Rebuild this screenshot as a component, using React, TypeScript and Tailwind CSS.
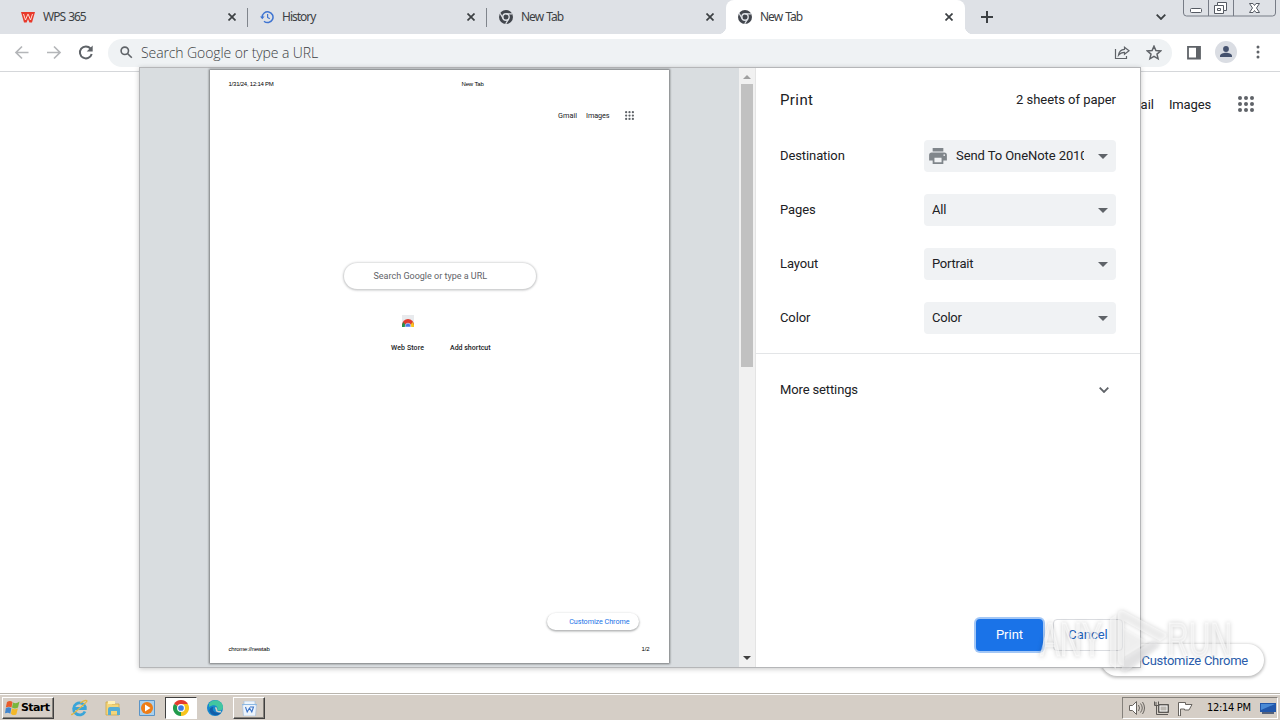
import type { ReactNode } from "react";
import { clsx } from "clsx";

const tabs = [
    { title: "WPS 365", icon: "wps", active: false },
    { title: "History", icon: "history", active: false },
    { title: "New Tab", icon: "chrome", active: false },
    { title: "New Tab", icon: "chrome", active: true },
];

const settings = [
    { label: "Destination", value: "Send To OneNote 2010", printer: true },
    { label: "Pages", value: "All", printer: false },
    { label: "Layout", value: "Portrait", printer: false },
    { label: "Color", value: "Color", printer: false },
];

function TabIcon({ name }: { name: string }) {
    if (name === "wps") {
        return (
            <svg viewBox="0 0 14 14" className="h-3.5 w-3.5 shrink-0">
                <path d="M0 2h14l-3 10.500H8.400L7 9l-1.400 3.500H3z" fill="#e8392b" />
                <path d="M2.500 4 4.500 10l2.300-5.800h.4L9.500 10l2-6" fill="none" stroke="#ffdcd2" strokeWidth="1" />
            </svg>
        );
    }
    if (name === "history") {
        return (
            <svg viewBox="0 0 14 14" className="h-3.5 w-3.5 shrink-0" fill="none" stroke="#3f74d1" strokeWidth="1.5">
                <path d="M2.200 7.300A5.400 5.400 0 1 1 4 11.200" />
                <path d="M7.600 4v3.400l2.200 1.400" strokeWidth="1.2" />
                <path d="M0 6.600h4.600L2.300 9.200z" fill="#3f74d1" stroke="none" />
            </svg>
        );
    }
    return (
        <svg viewBox="0 0 14 14" className="h-3.5 w-3.5 shrink-0">
            <circle cx="7" cy="7" r="7" fill="#42464d" />
            <circle cx="7" cy="7" r="3.200" fill="#42464d" stroke="#dee1e6" strokeWidth="1.400" />
            <path d="M7 3.800h6.200M4.200 8.600 1.100 3.300M9.800 8.600l-3.100 5.300" stroke="#dee1e6" strokeWidth="1.200" />
        </svg>
    );
}

function TabStrip() {
    return (
        <div className="flex h-[34px] bg-[#dee1e6] pl-[9px] text-[12px] text-[#3c4043]">
            {tabs.map((tab, i) => (
                <div
                    key={i}
                    className={clsx(
                        "relative flex h-[34px] w-[239px] items-center pl-3 pr-3",
                        tab.active && "rounded-t-lg bg-white"
                    )}
                >
                    <TabIcon name={tab.icon} />
                    <span className="ml-2 flex-1 font-['Noto_Sans',sans-serif] tracking-[-1px] [word-spacing:1px]">{tab.title}</span>
                    <svg viewBox="0 0 8 8" className="h-2 w-2" stroke="#3c4043" strokeWidth="1.700">
                        <path d="m.5.5 7 7M7.500.5l-7 7" />
                    </svg>
                    {i < 2 && <span className="absolute right-0 top-2 h-[19px] w-px bg-[#80858c]" />}
                    {tab.active && (
                        <>
                            <span className="absolute -left-2 bottom-0 h-2 w-2 bg-[radial-gradient(circle_at_0_0,transparent_8px,white_8.5px)]" />
                            <span className="absolute -right-2 bottom-0 h-2 w-2 bg-[radial-gradient(circle_at_100%_0,transparent_8px,white_8.5px)]" />
                        </>
                    )}
                </div>
            ))}
            <svg viewBox="0 0 12 12" className="ml-4 mt-[11px] h-3 w-3" stroke="#3c4043" strokeWidth="2">
                <path d="M6 0v12M0 6h12" />
            </svg>
            <svg viewBox="0 0 10 6" className="ml-[163px] mt-[14px] h-1.5 w-2.5" fill="none" stroke="#3c4043" strokeWidth="1.8">
                <path d="m.7.7 4.300 4.300L9.300.7" />
            </svg>
            <svg viewBox="0 0 93 17" className="ml-[17px] h-[17px] w-[93px]" fill="none" stroke="#777c86">
                <path d="M.5 0v13q0 3 3 3h86q3 0 3-3V0M25.500 0v16M50.500 0v16" />
                <rect x="7.500" y="8.500" width="11" height="4" rx="1" fill="#fff" stroke="#555a63" />
                <path d="M34.500 2.500h9v8h-3v3h-9v-8h3z" fill="#fff" stroke="#555a63" />
                <path d="M34.500 5.500h6v5M34.500 8.500h3v2h-3z" stroke="#555a63" />
                <path d="M66.500 3.500h3.500l1.500 2 1.500-2h3.500l-3 4.500 3 4.500H73l-1.500-2-1.500 2h-3.500l3-4.500z" fill="#fff" stroke="#555a63" />
            </svg>
        </div>
    );
}

function Toolbar() {
    return (
        <div className="flex h-[38px] items-center border-b border-[#d5d7da] bg-white pl-[14px]">
            <svg viewBox="0 0 16 16" className="h-4 w-4" fill="none" stroke="#b4b6b9" strokeWidth="1.7">
                <path d="M14.500 7.500H2M8 1.500 2 7.500l6 6" />
            </svg>
            <svg viewBox="0 0 16 16" className="ml-4 h-4 w-4" fill="none" stroke="#b4b6b9" strokeWidth="1.7">
                <path d="M1 7.500h12.500M8 1.500l6 6-6 6" />
            </svg>
            <svg viewBox="0 0 16 16" className="ml-4 h-4 w-4" fill="none" stroke="#5f6368" strokeWidth="2">
                <path d="M13.700 9A6 6 0 1 1 12.500 3.500" />
                <path d="M14.700.5v6H8.700z" fill="#5f6368" stroke="none" />
            </svg>
            <div className="ml-[14px] flex h-7 w-[1064px] items-center rounded-full bg-[#eff2f4] pl-3">
                <svg viewBox="0 0 13 13" className="h-[13px] w-[13px]" fill="none" stroke="#5f6368" strokeWidth="1.600">
                    <circle cx="4.800" cy="4.800" r="3.700" />
                    <path d="m7.500 7.500 4.300 4.300" />
                </svg>
                <span className="ml-2 flex-1 font-['Open_Sans',sans-serif] text-[14px] font-light tracking-[-0.1px] text-[#3c4043]">
                    Search Google or type a URL
                </span>
                <svg viewBox="0 0 16 14" className="h-3.5 w-4" fill="none" stroke="#5f6368" strokeWidth="1.200">
                    <path d="M1.500 3v9.500h11V10" />
                    <path d="M10.500 1.200 15 4.700l-4.500 3.500V6.400c-3 0-4.500.8-6 2.800.4-3 2.400-5.700 6-5.900z" />
                </svg>
                <svg viewBox="0 0 16 16" className="ml-4 mr-[10px] h-4 w-4" fill="none" stroke="#5f6368" strokeWidth="1.500">
                    <path d="m8 1.200 1.900 4.400 4.700.4-3.600 3.100 1.100 4.700L8 11.300l-4.100 2.500L5 9.100 1.400 6l4.700-.4z" />
                </svg>
            </div>
            <svg viewBox="0 0 14 14" className="ml-[15px] h-3.5 w-3.5">
                <path d="M1 .9h12v11.600H1z" fill="none" stroke="#5f6368" strokeWidth="1.800" />
                <path d="M9 .5h4v12H9z" fill="#5f6368" />
            </svg>
            <svg viewBox="0 0 22 22" className="-mt-0.5 ml-[14px] h-[22px] w-[22px]">
                <circle cx="11" cy="11" r="11" fill="#dadde3" />
                <circle cx="11" cy="8" r="2.900" fill="#45526e" />
                <path d="M5 16v-1c0-2.200 3.500-3.300 6-3.300s6 1.100 6 3.300v1z" fill="#45526e" />
            </svg>
            <svg viewBox="0 0 4 14" className="-mt-px ml-[19px] h-3.5 w-1" fill="#5f6368">
                <circle cx="2" cy="2" r="1.500" />
                <circle cx="2" cy="7" r="1.500" />
                <circle cx="2" cy="12" r="1.500" />
            </svg>
        </div>
    );
}

function AppsGrid({ className }: { className: string }) {
    return (
        <svg viewBox="0 0 16 16" className={className} fill="#5f6368">
            {[2, 8, 14].map((y) => [2, 8, 14].map((x) => <circle key={`${x}-${y}`} cx={x} cy={y} r="2" />))}
        </svg>
    );
}

function NewTabPage() {
    return (
        <div className="flex h-[621px] flex-col items-end justify-between bg-white pb-[17px] text-[13px] text-[#202124]">
            <div className="mr-[26px] mt-6 flex h-4 items-center">
                <span className="pt-px">Gmail</span>
                <span className="ml-[15px] pt-px tracking-[-0.15px]">Images</span>
                <AppsGrid className="ml-[27px] h-4 w-4" />
            </div>
            <div className="mr-4 flex h-8 w-[163px] items-center justify-end rounded-full bg-white pr-4 pt-0.5 tracking-[-0.25px] text-[#2a5cab] shadow-[0_1px_3px_1px_rgba(0,0,0,0.25)]">
                Customize Chrome
            </div>
        </div>
    );
}

function PaperPreview() {
    return (
        <div className="mr-px flex h-[593px] w-[459px] flex-col bg-white text-[#202124] shadow-[0_0_2px_1px_rgba(0,0,0,0.45)]">
            <div className="mt-2.5 flex h-2 items-center pl-[19px] font-['Liberation_Sans',sans-serif] text-[6px] text-black">
                <span className="w-[233px] tracking-[-0.23px]">1/31/24, 12:14 PM</span>
                <span className="tracking-[-0.15px]">New Tab</span>
            </div>
            <div className="mr-[35px] mt-[22px] flex h-2.5 items-center justify-end text-[7.3px]">
                <span className="pt-0.5">Gmail</span>
                <span className="ml-[9px] pt-0.5 tracking-[-0.1px]">Images</span>
                <AppsGrid className="ml-[15px] h-[9px] w-[9px]" />
            </div>
            <div className="ml-[134px] mt-[143px] flex h-[26px] w-48 items-center rounded-full pl-[30px] pt-0.5 text-[9px] text-[#5f6368] shadow-[0_0.5px_2px_1px_rgba(60,64,67,0.28)]">
                Search Google or type a URL
            </div>
            <div className="ml-[192px] mt-[26px] flex h-3 w-3 items-end justify-center bg-[#e8eaed]">
                <svg viewBox="0 0 12 8" className="h-2 w-3">
                    <path d="M0 8V6a6 6 0 0 1 12 0v2z" fill="#df3b2f" />
                    <path d="M0 8V6l1.300-3L5 8z" fill="#24924b" />
                    <path d="M12 8V6l-1.300-3L7 8z" fill="#f9c51d" />
                    <path d="M3.200 8V7a2.800 2.800 0 0 1 5.600 0v1z" fill="#4778e8" stroke="#fff" strokeWidth=".5" />
                </svg>
            </div>
            <div className="ml-[181px] mt-4 flex h-2.5 items-center pl-[0.5px] text-[7px] font-medium">
                <span className="w-[59px] tracking-[0.1px]">Web Store</span>
                <span>Add shortcut</span>
            </div>
            <div className="ml-[337px] mt-[260px] flex h-[17px] w-[92px] items-center justify-end rounded-full pr-[9px] pt-px text-[7.2px] tracking-[-0.05px] text-[#1a73e8] shadow-[0_1px_2px_0.5px_rgba(60,64,67,0.4)]">
                Customize Chrome
            </div>
            <div className="ml-[19px] mr-[19px] mt-[15px] flex h-2 items-center justify-between font-['Liberation_Sans',sans-serif] text-[6px] text-black">
                <span className="tracking-[-0.22px]">chrome://newtab</span>
                <span className="tracking-[-0.1px]">1/2</span>
            </div>
        </div>
    );
}

function Scrollbar() {
    return (
        <div className="flex h-full w-[17px] flex-col items-center border-r border-[#e4e4e4] bg-[#f1f1f1]">
            <svg viewBox="0 0 8 4" className="mt-[7px] h-1 w-2">
                <path d="m0 4 4-4 4 4z" fill="#a0a0a0" />
            </svg>
            <div className="mt-[5px] h-[283px] w-3 bg-[#c1c1c1]" />
            <svg viewBox="0 0 8 4" className="mb-[7px] mt-auto h-1 w-2">
                <path d="m0 0 4 4 4-4z" fill="#404040" />
            </svg>
        </div>
    );
}

function SettingRow({ label, children }: { label: string; children: ReactNode }) {
    return (
        <div className="flex h-8 items-center justify-between">
            <span className="tracking-[-0.1px]">{label}</span>
            <div className="flex h-8 w-48 items-center rounded bg-[#f0f2f4] pr-2">{children}</div>
        </div>
    );
}

function PrintDialog() {
    return (
        <div className="absolute left-[139px] top-[67px] flex h-[601px] w-[1002px] border border-[#b5b6b8] bg-white shadow-[0_1px_5px_rgba(0,0,0,0.22)]">
            <div className="flex w-[599px] justify-center bg-[#d9dde0] pt-0.5">
                <PaperPreview />
            </div>
            <Scrollbar />
            <div className="flex flex-1 flex-col text-[13px] text-[#202124]">
                <div className="flex h-16 items-center justify-between px-6">
                    <h1 className="text-[15px] tracking-[0.4px]">Print</h1>
                    <span className="tracking-[-0.03px]">2 sheets of paper</span>
                </div>
                <div className="flex flex-col gap-[22px] px-6 pt-2">
                    {settings.map((s) => (
                        <SettingRow key={s.label} label={s.label}>
                            {s.printer && (
                                <svg viewBox="2 3 20 18" className="ml-[5px] h-4 w-[18px]" fill="#80868b">
                                    <path d="M19 8H5a3 3 0 0 0-3 3v6h4v4h12v-4h4v-6a3 3 0 0 0-3-3zm-3 11H8v-5h8v5zm3-7a1 1 0 1 1 0-2 1 1 0 0 1 0 2zM18 3H6v4h12V3z" />
                                </svg>
                            )}
                            <span
                                className={clsx(
                                    "flex-1 overflow-hidden whitespace-nowrap",
                                    s.printer ? "ml-[9px] mr-[14px] tracking-[-0.08px]" : "ml-2 tracking-[-0.25px]"
                                )}
                            >
                                {s.value}
                            </span>
                            <svg viewBox="0 0 10 5" className="h-[5px] w-2.5">
                                <path d="m0 0 5 5 5-5z" fill="#5f6368" />
                            </svg>
                        </SettingRow>
                    ))}
                </div>
                <div className="mt-[19px] flex h-[73px] items-center justify-between border-t border-[#e3e5e7] px-6">
                    <span className="tracking-[-0.13px]">More settings</span>
                    <svg viewBox="0 0 10 6" className="mr-[7px] h-1.5 w-2.5" fill="none" stroke="#5f6368" strokeWidth="1.800">
                        <path d="m.7.7 4.300 4.300L9.300.7" />
                    </svg>
                </div>
                <div className="mb-4 mr-[17px] mt-auto flex justify-end gap-[10px]">
                    <button className="h-8 w-[67px] rounded bg-[#1a73e8] text-white shadow-[0_0_0_2px_rgba(26,115,232,0.4)]">Print</button>
                    <button className="h-8 w-[70px] rounded border border-[#dadce0] text-[#2463bd]">Cancel</button>
                </div>
            </div>
        </div>
    );
}

function Watermark() {
    return (
        <svg
            viewBox="0 0 200 66"
            className="pointer-events-none absolute left-[1036px] top-[607px] h-[66px] w-[200px] drop-shadow-[0_0_2px_rgba(0,0,0,0.32)]"
            fill="#fff"
            fillOpacity=".5"
        >
            <g fontFamily="'Liberation Sans', sans-serif" fontSize="49" stroke="#fff" strokeOpacity=".4" strokeWidth="1.5">
                <text x="4" y="49" textLength="62" lengthAdjust="spacingAndGlyphs">ANY</text>
                <text x="131" y="49" textLength="65" lengthAdjust="spacingAndGlyphs">RUN</text>
            </g>
            <path d="M74 12v45l6 5V8z" />
            <path d="M82 8q0-6 6-4l41 22q3 2 0 5l-5 3-36-20v45q-6-1-6-6z" />
            <path d="M88 21 112 35 89 49z" fillOpacity=".3" />
            <path d="m89 51 28-17 7 4-31 25q-6 3-8 0z" fill="#ececed" />
        </svg>
    );
}

function Taskbar() {
    return (
        <div className="flex h-[27px] items-center border-t border-[#b9b5ad] bg-[#d5cec6] pt-0.5 shadow-[inset_0_1px_0_#fff]">
            <div className="ml-0.5 flex h-[22px] w-[52px] items-center border border-b-[#404040] border-l-white border-r-[#404040] border-t-white pl-0.5 shadow-[inset_-1px_-1px_#85817b]">
                <svg viewBox="0 0 15 14" className="h-3.5 w-[15px] shrink-0">
                    <path d="M2 1q3-2 5.500 0L6.500 6.500Q4 5 .8 6.500z" fill="#e85b2b" />
                    <path d="M8 1.500q3 2 6.500-1L13 6.500q-3 2-6 0z" fill="#79b63c" />
                    <path d="M.8 7.300q3-2 5.500 0l-1 5.500q-2-2-5.300-.5z" fill="#4286ce" />
                    <path d="M6.900 7.300q3 2 6 0l-1.500 6q-3 2-5.500-.5z" fill="#f3b82a" />
                </svg>
                <span className="ml-px font-['DejaVu_Sans',sans-serif] text-[11px] font-bold tracking-[-0.6px] text-black">Start</span>
            </div>
            <svg viewBox="0 0 18 18" className="ml-4 h-[18px] w-[18px]" fill="none">
                <path d="M15 12.500a6 6 0 1 1 .3-4.500v1.500H5" stroke="#3ba5d8" strokeWidth="2.800" />
                <path d="M2 15C-1 19 17 3 17 2c-1-2-5 1-7 2" stroke="#e3b83e" strokeWidth="1.300" />
            </svg>
            <svg viewBox="0 0 16 16" className="ml-[17px] h-4 w-4">
                <path d="M1 2h5l1 2h7v11H1z" fill="#f3d57a" stroke="#cda84a" strokeWidth=".8" />
                <path d="M3 1h7v3H3z" fill="#fff1b8" />
                <path d="M3 15V9q0-2 2-2h8q2 0 2 2v6h-3v-4H6v4z" fill="#55add5" />
            </svg>
            <svg viewBox="0 0 16 16" className="ml-[18px] h-4 w-4">
                <path d="M.5.5h15v15H.5z" fill="#a9d0ed" stroke="#5b94c6" />
                <circle cx="8" cy="8" r="6" fill="#ee7d16" />
                <path d="m6 4.500 5.500 3.500L6 11.500z" fill="#fff" />
            </svg>
            <div className="ml-[10px] flex h-[22px] w-8 items-center justify-center border border-b-white border-l-[#404040] border-r-white border-t-[#404040] bg-white">
                <svg viewBox="0 0 16 16" className="h-4 w-4">
                    <path d="M8 8 1.070 4A8 8 0 0 1 14.930 4z" fill="#e33b2e" />
                    <path d="M8 8 1.070 4A8 8 0 0 0 8 16z" fill="#229b4c" />
                    <path d="M8 8v8a8 8 0 0 0 6.930-12H8z" fill="#f7c41c" />
                    <circle cx="8" cy="8" r="3.400" fill="#3b7be2" stroke="#fff" strokeWidth="1.100" />
                </svg>
            </div>
            <svg viewBox="0 0 16 16" className="ml-[10px] h-4 w-4">
                <circle cx="8" cy="8" r="8" fill="#1687ce" />
                <path d="M2 3.500C7-3 16 1 16 7c0 4-4 4-6 3 2-3-2-7-8-3z" fill="#42c6a0" />
                <path d="M6.500 7C4 10 8 14 14 12.500 11 17 4 16 2.500 11 2 8 5 6.500 6.500 7z" fill="#125da8" />
                <path d="M8.300 7.500c2 1 .5 2.800 1.700 3.500 1 .8 2.500.9 4 .5" fill="none" stroke="#d5cec6" strokeWidth="1.500" />
            </svg>
            <div className="ml-[10px] flex h-[22px] w-8 items-center justify-center border border-b-[#404040] border-l-white border-r-[#404040] border-t-white shadow-[inset_-1px_-1px_#85817b]">
                <svg viewBox="0 0 15 15" className="h-[15px] w-[15px]">
                    <path d="M2 0h11v4h1.500l-1 11h-12l-1-11H2z" fill="#edf4fb" stroke="#a6c0dc" strokeWidth=".7" />
                    <path d="M0 3.500h15" stroke="#8cb9e4" strokeWidth="1" />
                    <path d="m3.500 6 1.700 5L7.500 7l2.300 4 1.700-5H8" fill="none" stroke="#3a73c8" strokeWidth="1.100" />
                </svg>
            </div>
            <div className="ml-auto mr-0.5 flex h-[22px] w-[156px] items-center border border-b-white border-l-[#85817b] border-r-white border-t-[#85817b] pl-1.5">
                <svg viewBox="0 0 16 14" className="h-3.5 w-4" fill="none" stroke="#68645f">
                    <path d="M.5 4.500h3l4-4v13l-4-4h-3z" fill="#fff" />
                    <path d="M9.500 4q2 3 0 6M11.500 2.500q3.500 4.500 0 9M13.500 1q4 6 0 12" />
                </svg>
                <svg viewBox="0 0 16 15" className="ml-2 h-[15px] w-4" stroke="#5c5955">
                    <path d="M5.500 3.500h10v8h-10z" fill="#8d8a86" />
                    <path d="M7 5h7v5H7z" fill="#bcb8b2" stroke="#fff" strokeWidth=".8" />
                    <path d="M6 13.500h9" />
                    <path d="M1.500.5v4h4v-4M3.500 4.500v9h3M3 1v3" fill="none" />
                </svg>
                <svg viewBox="0 0 16 15" className="ml-2 h-[15px] w-4" fill="#fff" stroke="#68645f">
                    <path d="M1.500 15V1.500h7v2h6.500l-3 5.500H7.500V8h-4v7z" />
                </svg>
                <span className="ml-[14px] whitespace-nowrap font-['DejaVu_Sans_Condensed','DejaVu_Sans',sans-serif] text-[11px] tracking-[-0.3px] text-black">
                    12:14 PM
                </span>
                <svg viewBox="0 0 16 13" className="ml-auto mr-px h-[13px] w-4 shrink-0">
                    <path d="M0 1h16v9H0z" fill="#2257aa" />
                    <path d="M1 2h14L1 8z" fill="#4a8ad5" />
                    <path d="M2 11h12" stroke="#283d60" strokeWidth="1.500" />
                </svg>
            </div>
        </div>
    );
}

export default function App() {
    return (
        <div className="relative flex h-[720px] w-[1280px] flex-col overflow-hidden bg-white font-[Roboto,sans-serif]">
            <TabStrip />
            <Toolbar />
            <NewTabPage />
            <Taskbar />
            <PrintDialog />
            <Watermark />
        </div>
    );
}
